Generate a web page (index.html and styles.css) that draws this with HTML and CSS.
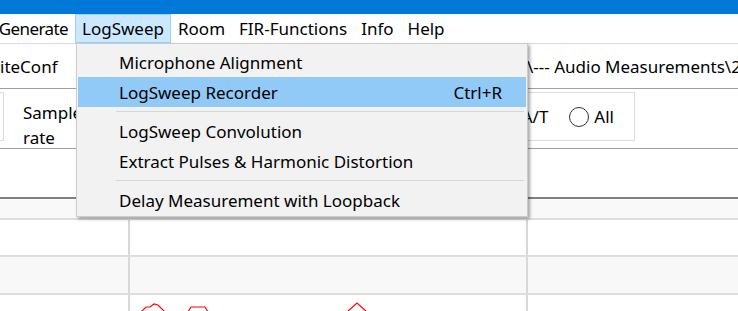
FILE: index.html
```html
<!DOCTYPE html>
<html lang="en">
<head>
    <meta charset="UTF-8">
    <title>LogSweep</title>
    <link rel="stylesheet" href="styles.css">
</head>
<body>
    <div class="window">
        <div class="titlebar"></div>

        <div class="menubar">
            <div class="menu-item first">Generate</div>
            <div class="menu-item open">
                LogSweep
                <div class="dropdown">
                    <div class="drop-item">Microphone Alignment</div>
                    <div class="drop-item active"><span>LogSweep Recorder</span><span class="shortcut">Ctrl+R</span></div>
                    <div class="drop-sep"></div>
                    <div class="drop-item">LogSweep Convolution</div>
                    <div class="drop-item">Extract Pulses &amp; Harmonic Distortion</div>
                    <div class="drop-sep"></div>
                    <div class="drop-item">Delay Measurement with Loopback</div>
                </div>
            </div>
            <div class="menu-item">Room</div>
            <div class="menu-item">FIR-Functions</div>
            <div class="menu-item">Info</div>
            <div class="menu-item">Help</div>
        </div>

        <div class="toolbar">
            <div class="tool-left">iteConf</div>
            <div class="tool-path">\--- Audio Measurements\2</div>
        </div>

        <div class="panel">
            <div class="group group-left"></div>
            <div class="field-label">Sample<br>rate</div>
            <div class="group group-right">
                <span class="opt-text">A/T</span>
                <span class="radio"></span>
                <span class="opt-text">All</span>
            </div>
        </div>

        <div class="blank"></div>

        <div class="table">
            <div class="table-head"></div>
            <div class="row">
                <div class="cell c1"></div>
                <div class="cell c2"></div>
                <div class="cell c3"></div>
            </div>
            <div class="row alt">
                <div class="cell c1"></div>
                <div class="cell c2"></div>
                <div class="cell c3"></div>
            </div>
            <div class="row">
                <div class="cell c1"></div>
                <div class="cell c2">
                    <svg class="curve" width="396" height="17" viewBox="0 0 396 17">
                        <polyline points="11,17 16,12 20,12 24,9 28,10 35,17" />
                        <polyline points="58,17 61,12 75,12 78,17" />
                        <polyline points="217,17 227,8 237,17" />
                    </svg>
                </div>
                <div class="cell c3"></div>
            </div>
        </div>
    </div>
</body>
</html>
```

FILE: styles.css
```css
body {
    margin: 0;
    background-color: #ffffff;
    font-family: "Noto Sans", "Open Sans", sans-serif;
    font-size: 17px;
    color: #000000;
}
.window {
    width: 738px;
    height: 311px;
    overflow: hidden;
}
.titlebar {
    height: 14px;
    background-color: #0078d7;
}

/* menu bar */
.menubar {
    display: flex;
    height: 29px;
    border-bottom: 1px solid #dadada;
}
.menu-item {
    position: relative;
    display: flex;
    align-items: center;
    padding: 0 6px;
    border: 1px solid transparent;
    white-space: nowrap;
}
.menu-item.first {
    box-sizing: border-box;
    width: 75px;
    justify-content: flex-end;
    padding: 0 6px 0 0;
    letter-spacing: -0.6px;
}
.menu-item.open {
    background-color: #cce8ff;
    border-color: #99d1ff;
}

/* dropdown */
.dropdown {
    position: absolute;
    top: 100%;
    left: 0;
    width: 448px;
    margin-top: 1px;
    padding: 3px 1px 1px;
    background-color: #f2f2f2;
    border: 1px solid #cccccc;
    box-shadow: 2px 2px 3px rgba(0, 0, 0, 0.35);
    z-index: 10;
}
.drop-item {
    display: flex;
    justify-content: space-between;
    align-items: center;
    height: 30px;
    padding: 0 24px 0 41px;
}
.drop-item.active {
    background-color: #91c9f7;
}
.drop-sep {
    height: 1px;
    margin: 4px 2px 4px 38px;
    background-color: #d7d7d7;
}

/* toolbar */
.toolbar {
    display: flex;
    align-items: center;
    height: 44px;
    border-bottom: 1px solid #a0a0a0;
    white-space: nowrap;
}
.tool-left {
    width: 527px;
}
.tool-path {
    flex: 1;
    overflow: hidden;
}

/* option panel */
.panel {
    display: flex;
    height: 59px;
    border-bottom: 1px solid #a0a0a0;
    white-space: nowrap;
}
.group {
    box-sizing: border-box;
    height: 49px;
    margin-top: 3px;
    border: 1px solid #dcdcdc;
}
.group-left {
    width: 40px;
    margin-left: -36px;
}
.field-label {
    margin: 11px 0 0 19px;
    line-height: 25px;
    width: 60px;
}
.group-right {
    display: flex;
    align-items: center;
    justify-content: flex-end;
    margin-left: 100px;
    width: 452px;
    padding-right: 20px;
}
.opt-text {
    line-height: 20px;
}
.radio {
    box-sizing: border-box;
    width: 20px;
    height: 20px;
    margin: 0 5px 0 21px;
    border: 1.5px solid #333333;
    border-radius: 50%;
    background-color: #ffffff;
}

.blank {
    height: 48px;
    border-bottom: 2px solid #808080;
}

/* data grid */
.table-head {
    height: 19px;
    background-color: #f9f9f9;
    border-bottom: 2px solid #dedede;
}
.row {
    display: flex;
    height: 35px;
    border-bottom: 2px solid #dedede;
}
.row.alt {
    height: 36px;
    background-color: #f8f8f8;
}
.cell {
    box-sizing: border-box;
    height: 100%;
}
.c1 {
    width: 130px;
    border-right: 2px solid #d8d8d8;
}
.c2 {
    width: 398px;
    border-right: 2px solid #d8d8d8;
}
.c3 {
    flex: 1;
}
.curve {
    display: block;
}
.curve polyline {
    fill: none;
    stroke: #ff0000;
    stroke-width: 1.2;
}
```
